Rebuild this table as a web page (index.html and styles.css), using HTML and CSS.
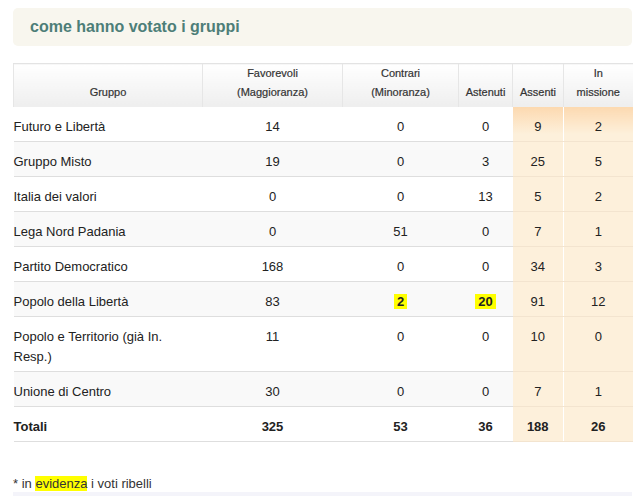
FILE: index.html
```html
<!DOCTYPE html>
<html lang="it">
<head>
<meta charset="utf-8">
<title>come hanno votato i gruppi</title>
<link rel="stylesheet" href="styles.css">
</head>
<body>
<div class="page">
  <div class="title-box"><h2 class="title">come hanno votato i gruppi</h2></div>
  <table class="votes">
    <colgroup>
      <col class="c-gruppo"><col class="c-fav"><col class="c-con"><col class="c-ast"><col class="c-ass"><col class="c-mis">
    </colgroup>
    <thead>
      <tr>
        <th>Gruppo</th>
        <th>Favorevoli<br>(Maggioranza)</th>
        <th>Contrari<br>(Minoranza)</th>
        <th>Astenuti</th>
        <th>Assenti</th>
        <th>In<br>missione</th>
      </tr>
    </thead>
    <tbody>
      <tr class="first"><td class="name">Futuro e Libertà</td><td>14</td><td>0</td><td>0</td><td class="peach">9</td><td class="peach sep">2</td></tr>
      <tr class="alt"><td class="name">Gruppo Misto</td><td>19</td><td>0</td><td>3</td><td class="peach">25</td><td class="peach sep">5</td></tr>
      <tr><td class="name">Italia dei valori</td><td>0</td><td>0</td><td>13</td><td class="peach">5</td><td class="peach sep">2</td></tr>
      <tr class="alt"><td class="name">Lega Nord Padania</td><td>0</td><td>51</td><td>0</td><td class="peach">7</td><td class="peach sep">1</td></tr>
      <tr><td class="name">Partito Democratico</td><td>168</td><td>0</td><td>0</td><td class="peach">34</td><td class="peach sep">3</td></tr>
      <tr class="alt"><td class="name">Popolo della Libertà</td><td>83</td><td><span class="hl">2</span></td><td><span class="hl">20</span></td><td class="peach">91</td><td class="peach sep">12</td></tr>
      <tr><td class="name">Popolo e Territorio (già In. Resp.)</td><td>11</td><td>0</td><td>0</td><td class="peach">10</td><td class="peach sep">0</td></tr>
      <tr class="alt"><td class="name">Unione di Centro</td><td>30</td><td>0</td><td>0</td><td class="peach">7</td><td class="peach sep">1</td></tr>
      <tr class="total"><td class="name">Totali</td><td>325</td><td>53</td><td>36</td><td class="peach">188</td><td class="peach sep">26</td></tr>
    </tbody>
  </table>
  <p class="note">* in <span class="mark">evidenza</span> i voti ribelli</p>
  <div class="strip"></div>
</div>
</body>
</html>
```

FILE: styles.css
```css
html, body {
  margin: 0;
  padding: 0;
  background: #fff;
}

body {
  font-family: "Liberation Sans", Arial, sans-serif;
  color: #222;
}

.page {
  width: 619px;
  padding: 8px 0 0 13px;
}

.title-box {
  background: #f8f6ee;
  border-radius: 5px;
  height: 38px;
  display: flex;
  align-items: center;
  padding-left: 17px;
}

.title {
  margin: 0;
  font-size: 16px;
  font-weight: bold;
  color: #4d7e78;
}

.votes {
  margin-top: 17px;
  width: 619px;
  border-collapse: collapse;
  table-layout: fixed;
  font-size: 13px;
}

.c-gruppo { width: 189px; }
.c-fav { width: 140px; }
.c-con { width: 116px; }
.c-ast { width: 54px; }
.c-ass { width: 51px; }
.c-mis { width: 69px; }

.votes th {
  padding: 0 0 5px;
  vertical-align: bottom;
  font-size: 11px;
  font-weight: normal;
  line-height: 19px;
  color: #333;
  text-align: center;
  background: linear-gradient(#ffffff, #eeeeee);
  border-top: 1px solid #e3e3e3;
  border-left: 1px solid #e6e6e6;
  -webkit-text-stroke: 0.2px #333;
}

.votes td {
  padding: 10px 0 4px;
  line-height: 20px;
  text-align: center;
  vertical-align: top;
  border-bottom: 1px solid #dedede;
}

.votes td.name {
  text-align: left;
  padding-right: 14px;
}

.votes tr.alt td {
  background: #f9f9f9;
}

.votes td.peach,
.votes tr.alt td.peach {
  background: #fdf0db;
  border-bottom-color: #f3e4cf;
}

.votes tr.first td.peach {
  background: linear-gradient(#fcd9b0, #fdf0db 80%);
}

.votes td.sep {
  border-left: 1px solid #fff;
}

.votes tr.total td {
  font-weight: bold;
}

.hl {
  background: #ffff00;
  font-weight: bold;
  padding: 0 3px;
}

.note {
  margin: 34px 0 0;
  font-size: 13px;
  line-height: 16px;
  color: #333;
}

.mark {
  background: #ffff00;
}

.strip {
  height: 6px;
  background: #f4f4fa;
}
```
